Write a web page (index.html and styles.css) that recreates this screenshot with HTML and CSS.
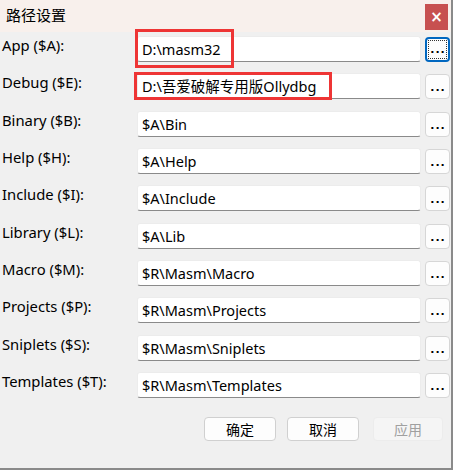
FILE: index.html
```html
<!DOCTYPE html>
<html>
<head>
<meta charset="utf-8">
<link rel="stylesheet" href="styles.css">
</head>
<body>
<div class="window">
  <div class="titlebar">
    <span class="title">路径设置</span>
    <span class="close">×</span>
  </div>
  <div class="content">
    <div class="grid">
      <div class="label">App ($A):</div>
      <div class="edit">D:\masm32<span class="mark mark1"></span></div>
      <div class="btn focus"><span class="dots">...</span></div>

      <div class="label">Debug ($E):</div>
      <div class="edit">D:\吾爱破解专用版Ollydbg<span class="mark mark2"></span></div>
      <div class="btn"><span class="dots">...</span></div>

      <div class="label">Binary ($B):</div>
      <div class="edit">$A\Bin</div>
      <div class="btn"><span class="dots">...</span></div>

      <div class="label">Help ($H):</div>
      <div class="edit">$A\Help</div>
      <div class="btn"><span class="dots">...</span></div>

      <div class="label">Include ($I):</div>
      <div class="edit">$A\Include</div>
      <div class="btn"><span class="dots">...</span></div>

      <div class="label">Library ($L):</div>
      <div class="edit">$A\Lib</div>
      <div class="btn"><span class="dots">...</span></div>

      <div class="label">Macro ($M):</div>
      <div class="edit">$R\Masm\Macro</div>
      <div class="btn"><span class="dots">...</span></div>

      <div class="label">Projects ($P):</div>
      <div class="edit">$R\Masm\Projects</div>
      <div class="btn"><span class="dots">...</span></div>

      <div class="label">Sniplets ($S):</div>
      <div class="edit">$R\Masm\Sniplets</div>
      <div class="btn"><span class="dots">...</span></div>

      <div class="label">Templates ($T):</div>
      <div class="edit">$R\Masm\Templates</div>
      <div class="btn"><span class="dots">...</span></div>
    </div>
    <div class="actions">
      <div class="pbtn ok">确定</div>
      <div class="pbtn cancel">取消</div>
      <div class="pbtn apply disabled">应用</div>
    </div>
  </div>
</div>
</body>
</html>
```
FILE: styles.css
```css
* { box-sizing: border-box; }
html, body { margin: 0; padding: 0; background: #f0f0f0; }
body {
  width: 453px;
  height: 470px;
  overflow: hidden;
  font-family: "Noto Sans", "Noto Sans CJK SC", sans-serif;
}
.window {
  width: 453px;
  height: 470px;
  background: #f0f0f0;
  border-right: 2px solid #8a8a8a;
  border-bottom: 2px solid #8a8a8a;
  position: relative;
}
.titlebar {
  height: 32px;
  background: #f8f0ec;
  display: flex;
  align-items: flex-start;
  justify-content: space-between;
}
.title {
  font-family: "Noto Sans CJK SC", sans-serif;
  font-size: 15px;
  color: #000;
  padding: 4px 0 0 6px;
  line-height: 22px;
}
.close {
  width: 23px;
  height: 26px;
  margin: 4px 3px 0 0;
  background: #c75050;
  color: #fff;
  font-family: "DejaVu Sans", sans-serif;
  font-size: 15px;
  font-weight: bold;
  display: flex;
  align-items: center;
  justify-content: center;
}
.content {
  padding: 4px 0 0 0;
}
.grid {
  display: grid;
  grid-template-columns: 133px 284px 25px;
  grid-auto-rows: 26px;
  row-gap: 11.33px;
  column-gap: 4px;
}
.label {
  font-size: 14.8px;
  color: #000;
  padding-left: 2px;
  line-height: 20px;
  margin-top: -1px;
  white-space: nowrap;
}
.edit {
  position: relative;
  background: #fff;
  border: 1px solid #ececec;
  border-bottom: 1px solid #8a8a8a;
  border-radius: 3px;
  font-size: 14.5px;
  line-height: 24px;
  padding-left: 4px;
  color: #000;
  white-space: nowrap;
}
.mark {
  position: absolute;
  border: 3px solid #ee3535;
  pointer-events: none;
}
.mark1 { left: -3px; top: -8px; width: 99px; height: 39px; }
.mark2 { left: -4px; top: -2px; width: 198px; height: 28px; }
.btn {
  height: 25px;
  margin-top: 1px;
  background: #fdfdfd;
  border: 1px solid #d6d6d6;
  border-radius: 4px;
  display: flex;
  align-items: flex-end;
  justify-content: center;
  position: relative;
}
.dots {
  font-family: "DejaVu Sans", sans-serif;
  font-weight: bold;
  font-size: 11px;
  line-height: 14px;
  letter-spacing: 1px;
  margin-right: -1px;
  color: #000;
  padding-bottom: 3px;
}
.btn.focus {
  border: 2px solid #0067c0;
}
.btn.focus::after {
  content: "";
  position: absolute;
  left: 1px; top: 1px; right: 1px; bottom: 1px;
  border: 1px dotted #333;
}
.actions {
  display: flex;
  justify-content: flex-end;
  gap: 11px;
  padding: 19px 8px 0 0;
}
.pbtn {
  width: 72px;
  height: 24px;
  background: #fdfdfd;
  border: 1px solid #d0d0d0;
  border-radius: 4px;
  font-family: "Noto Sans CJK SC", sans-serif;
  font-size: 14px;
  line-height: 22px;
  text-align: center;
  color: #000;
}
.pbtn.apply { width: 70px; margin-left: 3px; }
.pbtn.disabled {
  background: #f5f5f5;
  border-color: #ececec;
  color: #a0a0a0;
}
```
